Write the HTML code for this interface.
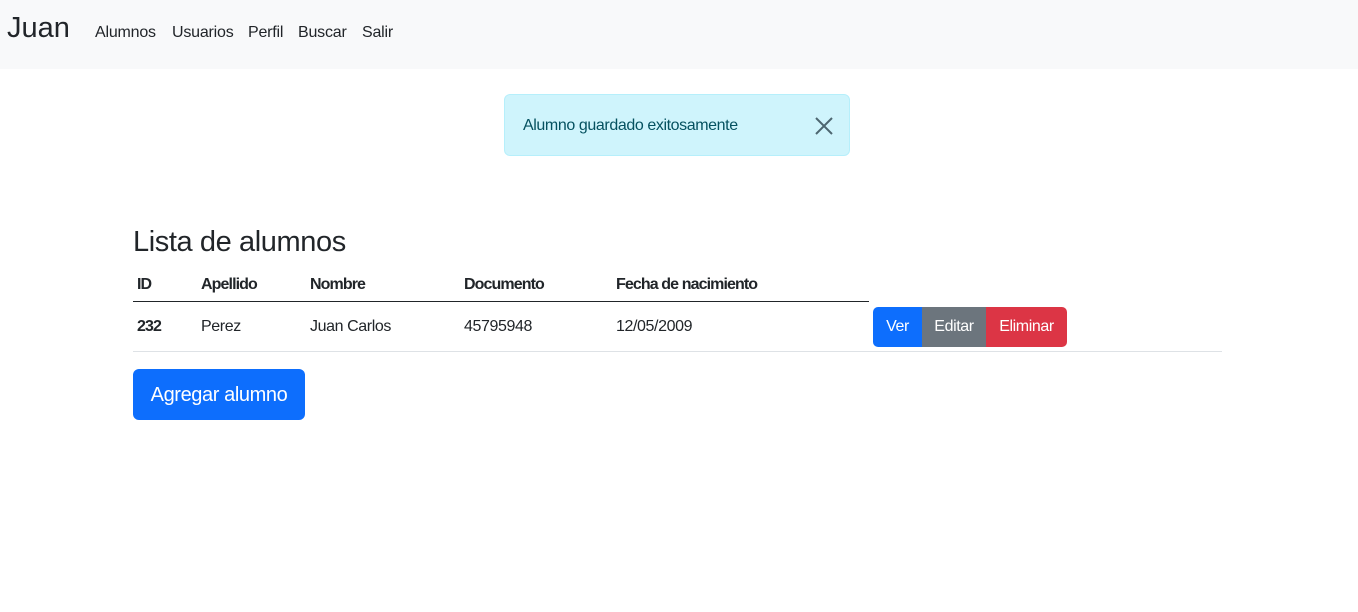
<!DOCTYPE html>
<html><head><style>
body{margin:0;font-family:"Liberation Sans",sans-serif;color:#212529;background:#fff;letter-spacing:-0.4px}
.nav{height:69px;background:#f8f9fa;position:relative}
.brand{position:absolute;left:7px;top:12px;font-size:29px;letter-spacing:0}
.links{position:absolute;left:95px;top:24px;font-size:16px;letter-spacing:-0.2px}
.links span{position:absolute;white-space:nowrap}
.alert{position:absolute;left:504px;top:94px;width:344px;height:60px;background:#cff4fc;border:1px solid #b6effb;border-radius:6px;color:#055160;font-size:16px;box-sizing:content-box}
.alert .t{position:absolute;left:18px;top:22px}
.alert svg{position:absolute;left:309px;top:21px}
h2{position:absolute;left:133px;top:226px;margin:0;font-weight:400;font-size:29px}
.c{position:absolute;font-size:16px}
.b{font-weight:bold;letter-spacing:-0.9px}
.btn{position:absolute;top:307px;height:40px;color:#fff;font-size:16px;line-height:40px;text-align:center}
</style></head><body>
<div class="nav"><div class="brand">Juan</div><div class="links"><span style="left:0">Alumnos</span><span style="left:77px">Usuarios</span><span style="left:153px">Perfil</span><span style="left:203px">Buscar</span><span style="left:267px">Salir</span></div></div>
<div class="alert"><div class="t">Alumno guardado exitosamente</div><svg width="20" height="20" viewBox="0 0 20 20"><path d="M2 2L18 18M18 2L2 18" stroke="#4d6670" stroke-width="2"/></svg></div>
<h2>Lista de alumnos</h2>
<div class="c b" style="left:137px;top:276px">ID</div>
<div class="c b" style="left:201px;top:276px">Apellido</div>
<div class="c b" style="left:310px;top:276px">Nombre</div>
<div class="c b" style="left:464px;top:276px">Documento</div>
<div class="c b" style="left:616px;top:276px">Fecha de nacimiento</div>
<div style="position:absolute;left:133px;top:301px;width:736px;height:1px;background:#212529"></div>
<div class="c b" style="left:137px;top:318px">232</div>
<div class="c" style="left:201px;top:318px">Perez</div>
<div class="c" style="left:310px;top:318px">Juan Carlos</div>
<div class="c" style="left:464px;top:318px">45795948</div>
<div class="c" style="left:616px;top:318px">12/05/2009</div>
<div class="btn" style="left:873px;width:49px;background:#0d6efd;border-radius:5px 0 0 5px">Ver</div>
<div class="btn" style="left:922px;width:64px;background:#6c757d">Editar</div>
<div class="btn" style="left:986px;width:81px;background:#dc3545;border-radius:0 5px 5px 0">Eliminar</div>
<div style="position:absolute;left:133px;top:351px;width:1089px;height:1px;background:#dee2e6"></div>
<div style="position:absolute;left:133px;top:369px;width:172px;height:51px;background:#0d6efd;border-radius:6px;color:#fff;font-size:20px;line-height:53px;text-align:center">Agregar alumno</div>
</body></html>
